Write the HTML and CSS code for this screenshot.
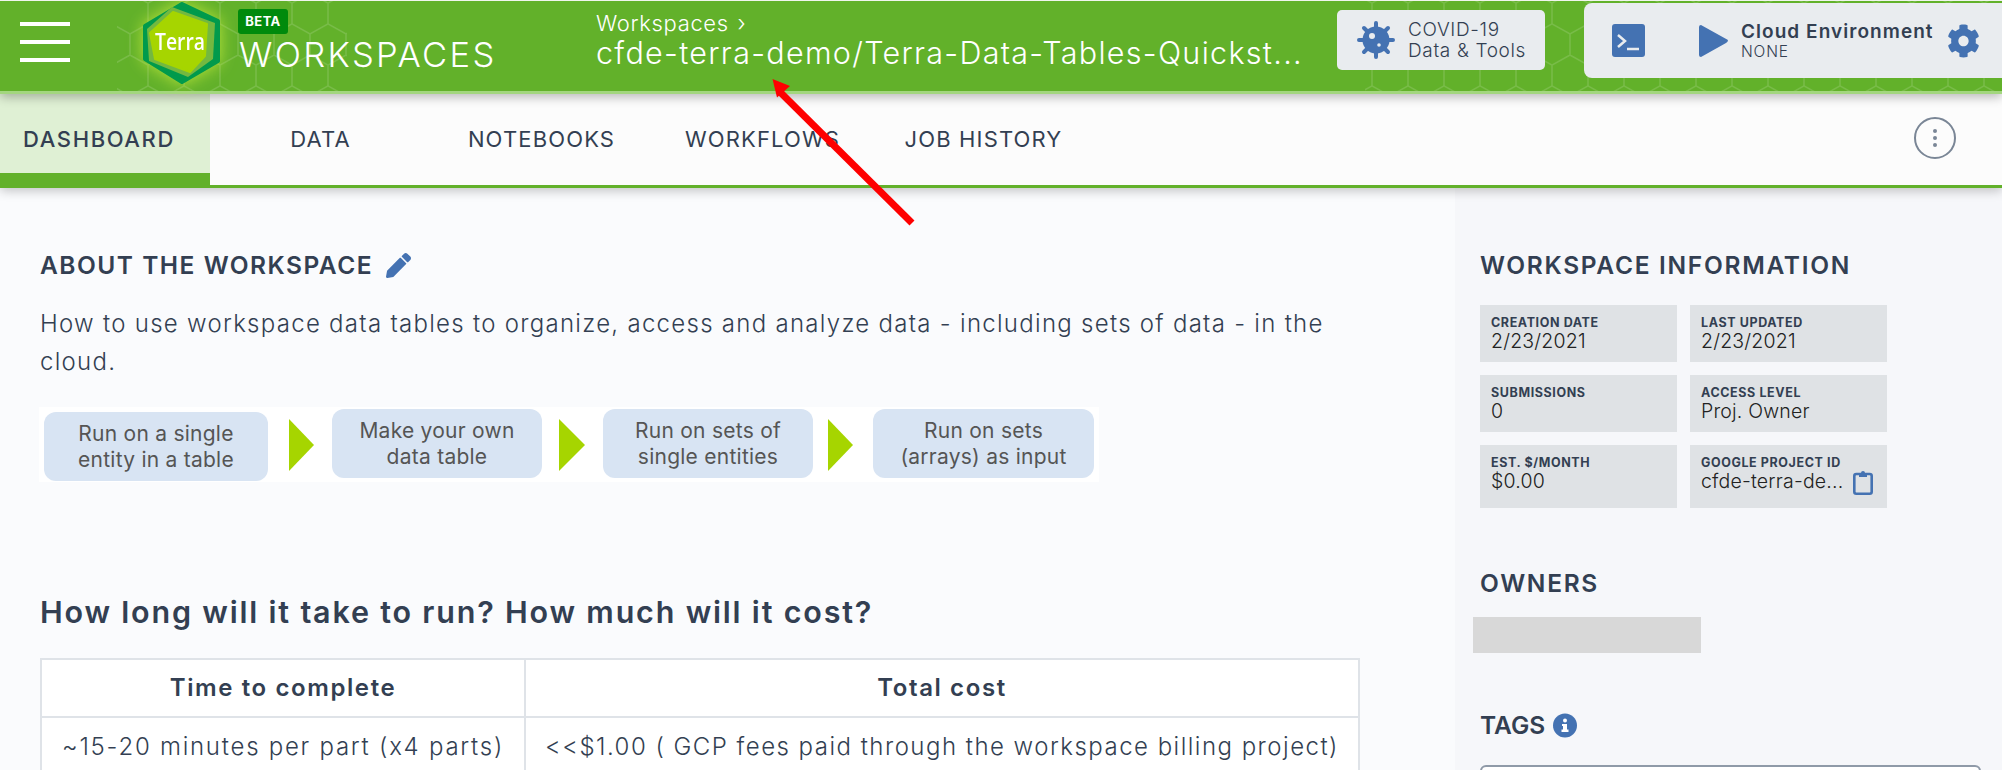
FILE: index.html
```html
<!DOCTYPE html>
<html lang="en">
<head>
<meta charset="utf-8">
<title>Terra Workspaces</title>
<link rel="stylesheet" href="styles.css">
</head>
<body>
<div class="page">
  <header class="topbar">
    <svg class="hex-bg" width="2002" height="90" aria-hidden="true">
      <defs>
        <pattern id="hex" width="36" height="62" patternUnits="userSpaceOnUse" x="4" y="-8">
          <path class="hex-line" d="M18 0 L36 10 V31 L18 41 L0 31 V10 Z M18 41 V62"/>
        </pattern>
      </defs>
      <rect x="117" y="0" width="230" height="90" fill="url(#hex)"/>
      <rect x="1365" y="0" width="637" height="90" fill="url(#hex)"/>
    </svg>
    <button class="burger" aria-label="Menu"><span></span><span></span><span></span></button>
    <svg class="logo" width="78" height="84" viewBox="0 0 78 84" role="img" aria-label="Terra">
      <polygon class="logo-outer" points="40,3 76,20 76,60 40,81 3,58 3,25"/>
      <polygon class="logo-mid" points="30,6 73,22 71,58 46,76 7,60 5,28"/>
      <polygon class="logo-inner" points="31,11 65,23 63,55 48,71 13,58 8,32"/>
      <text class="logo-text" x="38" y="49" text-anchor="middle" textLength="50" lengthAdjust="spacingAndGlyphs">Terra</text>
    </svg>
    <div class="brand">
      <span class="beta">BETA</span>
      <span class="brand-name">WORKSPACES</span>
    </div>
    <div class="crumbs">
      <div class="crumb-top">Workspaces <span class="crumb-sep">›</span></div>
      <div class="crumb-name">cfde-terra-demo/Terra-Data-Tables-Quickst...</div>
    </div>
    <div class="covid">
      <svg class="covid-icon" width="38" height="38" viewBox="0 0 38 38" aria-hidden="true">
        <circle class="fill-blue" cx="19" cy="19" r="13.500"/>
        <g class="virus-spikes">
          <path d="M19 2V36M2 19H36M7 7L31 31M31 7L7 31"/>
        </g>
        <circle class="fill-pale" cx="22" cy="24" r="1.800"/>
        <circle class="fill-pale" cx="15" cy="15" r="3"/>
      </svg>
      <div class="covid-text"><div>COVID-19</div><div>Data &amp; Tools</div></div>
    </div>
    <div class="cloud">
      <svg class="term" width="33" height="33" viewBox="0 0 33 33" aria-hidden="true">
        <rect class="fill-blue" width="33" height="33" rx="3"/>
        <path class="term-line" d="M6 11 L13 17 L6 23 M15 25 H27"/>
      </svg>
      <svg class="play" width="29" height="32" viewBox="0 0 29 32" aria-hidden="true">
        <path class="fill-blue" d="M2 0 L29 15 Q29 17 27 18 L2 32 Q0 32 0 30 V2 Q0 0 2 0 Z"/>
      </svg>
      <div class="cloud-text">
        <div class="cloud-title">Cloud Environment</div>
        <div class="cloud-sub">NONE</div>
      </div>
      <svg class="cog" width="33" height="34" viewBox="0 0 512 512" preserveAspectRatio="none" aria-hidden="true">
        <path class="fill-blue" d="M487.4 315.7l-42.6-24.6c4.3-23.2 4.3-47 0-70.2l42.6-24.6c4.900-2.800 7.100-8.600 5.500-14-11.100-35.600-30-67.800-54.700-94.600-3.800-4.100-10-5.100-14.800-2.300L380.800 110c-17.900-15.400-38.500-27.300-60.800-35.100V25.800c0-5.600-3.900-10.500-9.400-11.700-36.700-8.200-74.300-7.800-109.200 0-5.500 1.200-9.400 6.100-9.400 11.700V75c-22.200 7.900-42.800 19.800-60.800 35.100L88.700 85.500c-4.900-2.800-11-1.900-14.800 2.300-24.700 26.700-43.600 58.900-54.700 94.600-1.700 5.400.6 11.200 5.500 14L67.300 221c-4.300 23.200-4.300 47 0 70.200l-42.600 24.600c-4.900 2.800-7.100 8.600-5.500 14 11.100 35.600 30 67.800 54.700 94.600 3.800 4.100 10 5.100 14.800 2.300l42.600-24.600c17.900 15.400 38.500 27.300 60.800 35.100v49.200c0 5.600 3.900 10.500 9.400 11.700 36.700 8.200 74.300 7.800 109.200 0 5.500-1.200 9.400-6.100 9.400-11.700v-49.200c22.200-7.900 42.800-19.800 60.800-35.100l42.600 24.600c4.900 2.800 11 1.900 14.800-2.300 24.700-26.700 43.600-58.900 54.700-94.600 1.500-5.500-.7-11.300-5.600-14.100zM256 336c-44.100 0-80-35.900-80-80s35.900-80 80-80 80 35.900 80 80-35.900 80-80 80z"/>
      </svg>
    </div>
  </header>

  <nav class="tabs">
    <a class="tab tab-active">DASHBOARD</a>
    <a class="tab">DATA</a>
    <a class="tab">NOTEBOOKS</a>
    <a class="tab">WORKFLOWS</a>
    <a class="tab">JOB HISTORY</a>
    <div class="kebab"><span></span><span></span><span></span></div>
  </nav>

  <main class="main">
    <section class="content">
      <h2 class="about-title">ABOUT THE WORKSPACE
        <svg class="pencil" width="25" height="25" viewBox="0 0 512 512" aria-hidden="true">
          <path class="fill-blue" d="M497.9 142.1l-46.100 46.100c-4.700 4.700-12.300 4.700-17 0l-111-111c-4.700-4.700-4.700-12.300 0-17l46.100-46.100c18.700-18.700 49.100-18.700 67.900 0l60.100 60.100c18.800 18.700 18.800 49.100 0 67.900zM284.200 99.800L21.600 362.400.4 483.900c-2.900 16.400 11.400 30.600 27.800 27.800l121.500-21.300 262.600-262.600c4.700-4.700 4.700-12.300 0-17l-111-111c-4.800-4.700-12.400-4.700-17.100 0z"/>
        </svg>
      </h2>
      <p class="about-text">How to use workspace data tables to organize, access and analyze data - including sets of data - in the<br>cloud.</p>
      <div class="flow">
        <div class="flow-box flow-box-first">Run on a single<br>entity in a table</div>
        <svg class="flow-arrow arrow-a" width="25" height="52" viewBox="0 0 25 52" aria-hidden="true"><polygon class="fill-lime" points="0,0 25,26 0,52"/></svg>
        <div class="flow-box box-b">Make your own<br>data table</div>
        <svg class="flow-arrow arrow-b" width="26" height="52" viewBox="0 0 26 52" aria-hidden="true"><polygon class="fill-lime" points="0,0 26,26 0,52"/></svg>
        <div class="flow-box box-b">Run on sets of<br>single entities</div>
        <svg class="flow-arrow arrow-c" width="25" height="52" viewBox="0 0 25 52" aria-hidden="true"><polygon class="fill-lime" points="0,0 25,26 0,52"/></svg>
        <div class="flow-box box-c">Run on sets<br>(arrays) as input</div>
      </div>
      <h2 class="cost-title">How long will it take to run? How much will it cost?</h2>
      <table class="cost-table">
        <thead>
          <tr><th class="col-time">Time to complete</th><th>Total cost</th></tr>
        </thead>
        <tbody>
          <tr><td class="cell-time">~15-20 minutes per part (x4 parts)</td><td class="cell-cost">&lt;&lt;$1.00 ( GCP fees paid through the workspace billing project)</td></tr>
        </tbody>
      </table>
    </section>

    <aside class="side">
      <h2 class="side-title">WORKSPACE INFORMATION</h2>
      <div class="info-grid">
        <div class="card"><div class="card-label">CREATION DATE</div><div class="card-value">2/23/2021</div></div>
        <div class="card"><div class="card-label">LAST UPDATED</div><div class="card-value">2/23/2021</div></div>
        <div class="card"><div class="card-label">SUBMISSIONS</div><div class="card-value">0</div></div>
        <div class="card"><div class="card-label">ACCESS LEVEL</div><div class="card-value">Proj. Owner</div></div>
        <div class="card card-tall"><div class="card-label">EST. $/MONTH</div><div class="card-value">$0.00</div></div>
        <div class="card card-tall"><div class="card-label">GOOGLE PROJECT ID</div>
          <div class="card-row"><div class="card-value">cfde-terra-de...</div>
            <svg class="clip" width="20" height="25" viewBox="0 0 20 25" aria-hidden="true">
              <rect class="clip-body" x="1.300" y="4" width="17.400" height="19.700" rx="2"/>
              <path class="fill-blue" d="M6 3 H8 A2 2 0 0 1 12 3 H14 V7 H6 Z"/>
            </svg>
          </div>
        </div>
      </div>
      <h2 class="side-title owners-title">OWNERS</h2>
      <div class="redacted"></div>
      <h2 class="side-title tags-title">TAGS
        <svg class="info" width="24" height="25" viewBox="0 0 24 25" aria-hidden="true">
          <circle class="fill-blue" cx="12" cy="12.500" r="12"/>
          <circle class="fill-white" cx="12" cy="7.500" r="2"/>
          <path class="fill-white" d="M9 11 H14 V16.500 H15.500 V19 H8.500 V16.500 H10 V13 H9 Z"/>
        </svg>
      </h2>
      <div class="tag-input"></div>
    </aside>
  </main>

  <svg class="annotation" width="2002" height="770" aria-hidden="true">
    <line class="annotation-line" x1="912" y1="223" x2="780" y2="92"/>
    <polygon class="annotation-head" points="772.500,79 790,86 777,97.500"/>
  </svg>
</div>
</body>
</html>
```

FILE: styles.css
```css
* { box-sizing: border-box; }
html, body { margin: 0; padding: 0; }
body {
  font-family: Inter, "Open Sans", sans-serif;
  color: #333f52;
  background: #fafbfd;
}
.page {
  position: relative;
  width: 2002px;
  height: 770px;
  overflow: hidden;
  display: flex;
  flex-direction: column;
}
h2, p { margin: 0; }

.fill-blue { fill: #4472b2; }
.fill-pale { fill: #e9ecef; }
.fill-white { fill: #fff; }
.fill-lime { fill: #a6d500; }

/* Top bar */
.topbar {
  position: relative;
  z-index: 3;
  flex: none;
  height: 94px;
  display: flex;
  background: #62b12a;
  border-top: 1px solid #f0f5ec;
  border-bottom: 3px solid #a3d67f;
  box-shadow: 0 3px 10px rgba(0, 0, 0, 0.28);
}
.hex-bg { position: absolute; left: 0; top: 0; }
.hex-line { fill: none; stroke: rgba(255, 255, 255, 0.14); stroke-width: 1.5; }
.burger {
  position: relative;
  flex: none;
  width: 50px;
  height: 40px;
  margin: 21px 0 0 20px;
  padding: 0;
  border: 0;
  background: none;
  display: flex;
  flex-direction: column;
  justify-content: space-between;
}
.burger span { display: block; height: 4px; width: 50px; background: #fff; }
.logo {
  position: relative;
  flex: none;
  margin: 0 0 0 72px;
  filter: drop-shadow(0 0 8px rgba(200, 235, 60, 0.85));
}
.logo-outer { fill: #019a4c; stroke: #019a4c; stroke-width: 4; stroke-linejoin: round; }
.logo-mid { fill: #73b840; }
.logo-inner { fill: #a6d500; stroke: #a6d500; stroke-width: 2; stroke-linejoin: round; }
.logo-text { fill: #fff; font-size: 24px; font-weight: 600; font-family: "Open Sans", sans-serif; }
.brand {
  position: relative;
  flex: none;
  width: 358px;
  margin-left: 18px;
  display: flex;
  flex-direction: column;
  align-items: flex-start;
  padding-top: 8px;
}
.beta {
  width: 50px;
  height: 25px;
  border-radius: 3px;
  background: #008a0c;
  color: #fff;
  font-size: 13px;
  font-weight: 700;
  line-height: 25px;
  text-align: center;
  letter-spacing: 0.4px;
}
.brand-name {
  margin: 3px 0 0 1px;
  color: #fff;
  font-size: 34.500px;
  line-height: 36px;
  font-weight: 300;
  letter-spacing: 2.350px;
  white-space: nowrap;
}
.crumbs { position: relative; flex: none; width: 741px; color: #fff; font-weight: 300; padding-top: 8px; }
.crumb-top { font-size: 22px; line-height: 28px; letter-spacing: 0.650px; }
.crumb-sep { margin-left: 2px; }
.crumb-name { font-size: 30.500px; line-height: 36px; margin-top: -2px; white-space: nowrap; letter-spacing: 1.300px; }
.covid {
  position: relative;
  flex: none;
  width: 208px;
  height: 60px;
  margin-top: 9px;
  border-radius: 5px;
  background: #e9ecef;
  display: flex;
  align-items: center;
  padding-left: 20px;
  gap: 13px;
}
.virus-spikes path { fill: none; stroke: #4472b2; stroke-width: 4; stroke-linecap: round; }
.covid-text { font-size: 19px; line-height: 21px; font-weight: 300; letter-spacing: 0.650px; }
.cloud {
  position: relative;
  flex: none;
  width: 418px;
  height: 75px;
  margin: 2px 0 0 39px;
  border-radius: 8px 0 0 8px;
  background: #e9ecef;
  display: flex;
  align-items: center;
  padding-left: 28px;
}
.term { flex: none; }
.term-line { fill: none; stroke: #e9ecef; stroke-width: 2.500; }
.play { flex: none; margin-left: 54px; }
.cloud-text { flex: none; width: 206px; margin-left: 13px; }
.cloud-title { font-size: 19px; line-height: 22px; font-weight: 600; white-space: nowrap; letter-spacing: 1.050px; }
.cloud-sub { font-size: 15.500px; line-height: 17px; font-weight: 300; letter-spacing: 0.800px; }
.cog { flex: none; }

/* Tabs */
.tabs {
  position: relative;
  z-index: 2;
  flex: none;
  height: 94px;
  display: flex;
  align-items: stretch;
  background: #fcfcfc;
  box-shadow: inset 0 -3px 0 #62b12a, 0 3px 10px rgba(0, 0, 0, 0.22);
}
.tab {
  flex: none;
  width: 221px;
  padding-top: 32px;
  font-size: 22px;
  line-height: 26px;
  font-weight: 400;
  letter-spacing: 1.150px;
  text-align: center;
  white-space: nowrap;
}
.tab-active {
  width: 210px;
  padding-right: 12px;
  background: #dff0d4;
  border-bottom: 15px solid #62b12a;
  font-weight: 500;
  letter-spacing: 1.600px;
}
.kebab {
  position: absolute;
  right: 46px;
  top: 23px;
  width: 42px;
  height: 42px;
  border: 2px solid #7a8696;
  border-radius: 50%;
  display: flex;
  flex-direction: column;
  align-items: center;
  justify-content: center;
  gap: 3px;
}
.kebab span { width: 4px; height: 4px; border-radius: 50%; background: #7a8696; }

/* Main */
.main { flex: 1; display: flex; min-height: 0; }
.content { flex: none; width: 1455px; padding: 63px 0 0 40px; }
.about-title {
  display: flex;
  align-items: center;
  gap: 12.500px;
  height: 28px;
  font-size: 24.500px;
  font-weight: 600;
  letter-spacing: 1.500px;
  white-space: nowrap;
}
.about-text {
  margin-top: 26px;
  font-size: 24px;
  line-height: 38px;
  font-weight: 300;
  letter-spacing: 1.280px;
  white-space: nowrap;
}
.flow {
  display: flex;
  align-items: flex-start;
  width: 1060px;
  height: 75px;
  margin: 26px 0 0 -1px;
  padding: 2px 0 0 5px;
  background: #fff;
}
.flow-box {
  flex: none;
  height: 69px;
  border-radius: 12px;
  background: #d8e4f3;
  color: #555;
  font-size: 21px;
  line-height: 26px;
  text-align: center;
  display: flex;
  align-items: center;
  justify-content: center;
  font-weight: 400;
  letter-spacing: 0.250px;
}
.flow-box-first { width: 224px; margin-top: 3px; }
.box-b { width: 210px; }
.box-c { width: 221px; }
.flow-arrow { flex: none; margin-top: 10px; }
.arrow-a { margin-left: 21px; margin-right: 18px; }
.arrow-b { margin-left: 17px; margin-right: 18px; }
.arrow-c { margin-left: 15px; margin-right: 20px; }
.cost-title {
  margin-top: 112px;
  font-size: 30.500px;
  line-height: 36px;
  font-weight: 600;
  letter-spacing: 1.800px;
  white-space: nowrap;
}
.cost-table {
  width: 1320px;
  margin-top: 28px;
  border-collapse: collapse;
  background: #fff;
  table-layout: fixed;
}
.cost-table th, .cost-table td {
  border: 2px solid #dfe3e8;
  text-align: center;
  font-size: 24px;
  white-space: nowrap;
  padding: 0 0 2px;
}
.cost-table th { height: 58px; font-weight: 600; letter-spacing: 1.600px; }
.cost-table td { height: 60px; font-weight: 300; }
.cost-table .cell-time { letter-spacing: 1.750px; }
.cost-table .cell-cost { letter-spacing: 1.480px; }
.col-time { width: 484px; }

/* Sidebar */
.side {
  flex: none;
  width: 547px;
  padding: 63px 0 0 25px;
  background: #f6f7fa;
}
.side-title {
  height: 28px;
  display: flex;
  align-items: center;
  gap: 8px;
  font-size: 24.500px;
  font-weight: 600;
  letter-spacing: 1.700px;
  white-space: nowrap;
}
.info-grid {
  display: grid;
  grid-template-columns: 197px 197px;
  grid-template-rows: 57px 57px 63px;
  column-gap: 13px;
  row-gap: 13px;
  margin-top: 26px;
}
.card {
  background: #dfe2e5;
  padding: 10px 0 0 11px;
  min-width: 0;
}
.card-label {
  font-size: 12.500px;
  line-height: 15px;
  font-weight: 700;
  letter-spacing: 0.600px;
  white-space: nowrap;
}
.card-value {
  font-size: 19.500px;
  line-height: 22px;
  font-weight: 300;
  color: #222;
  white-space: nowrap;
  letter-spacing: 0.200px;
}
.card-row { display: flex; align-items: flex-start; }
.clip { flex: none; margin: 0 14px 0 auto; }
.clip-body { fill: none; stroke: #4472b2; stroke-width: 2.600; }
.owners-title { margin-top: 61px; }
.redacted {
  width: 228px;
  height: 36px;
  margin: 20px 0 0 -7px;
  background: #d8d8d8;
}
.tags-title { margin-top: 58px; letter-spacing: 0; }
.tag-input {
  width: 501px;
  height: 44px;
  margin-top: 26px;
  border: 2px solid #8f9aa8;
  border-radius: 6px;
  background: #fff;
}

/* Red annotation arrow over the screenshot */
.annotation { position: absolute; left: 0; top: 0; z-index: 5; pointer-events: none; }
.annotation-line { stroke: #fe0000; stroke-width: 7; }
.annotation-head { fill: #fe0000; }
```
